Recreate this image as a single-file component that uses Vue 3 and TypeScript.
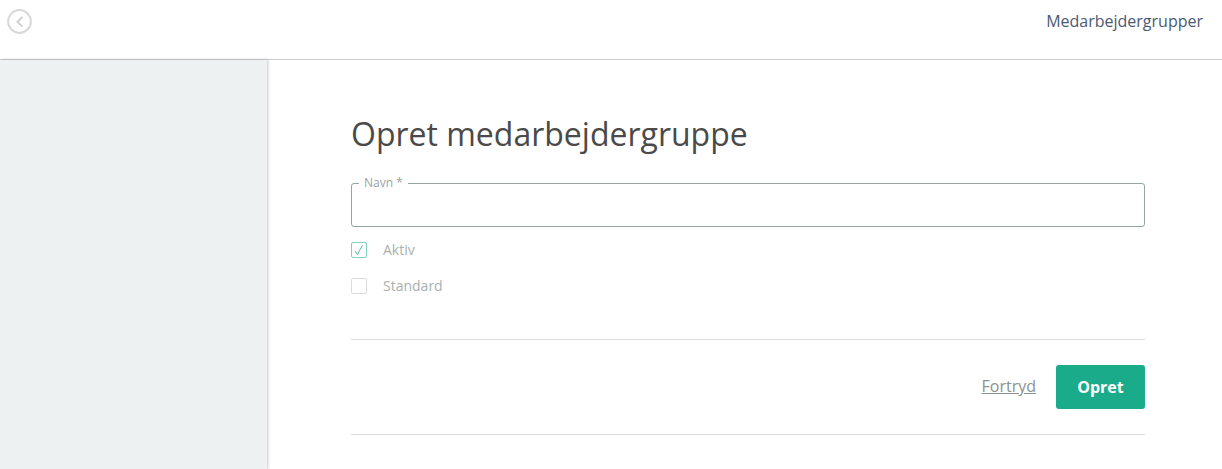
<script setup lang="ts">
const options = [
  { label: 'Aktiv', checked: true },
  { label: 'Standard', checked: false },
]
</script>

<template>
  <div class="page">
    <header class="top">
      <svg class="back" width="26" height="26" viewBox="0 0 26 26" fill="none">
        <circle cx="12.5" cy="12.5" r="11.4" stroke="#d9d9d9" stroke-width="2" />
        <path d="M15.5 8 L10.5 12.8 L15.5 17.6" stroke="#d2d2d2" stroke-width="2" />
      </svg>
      <span class="crumb">Medarbejdergrupper</span>
    </header>
    <div class="body">
      <aside class="side"></aside>
      <main class="main">
        <h1>Opret medarbejdergruppe</h1>
        <fieldset class="field">
          <legend>Navn *</legend>
        </fieldset>
        <div class="opts">
          <label v-for="o in options" :key="o.label" class="opt">
            <span class="box" :class="{ on: o.checked }">
              <svg v-if="o.checked" width="10" height="12" viewBox="0 0 10 12" fill="none">
                <path d="M1 7 L3.5 10.5 L8.5 1" stroke="#5fb8a6" stroke-width="1" />
              </svg>
            </span>
            <span class="lbl">{{ o.label }}</span>
          </label>
        </div>
        <div class="actions">
          <a class="cancel">Fortryd</a>
          <button class="submit" type="button">Opret</button>
        </div>
      </main>
    </div>
  </div>
</template>

<style>
html, body { margin: 0; background: #fff; overflow: hidden; }
</style>

<style scoped>
.page {
  width: 1222px;
  height: 469px;
  display: flex;
  flex-direction: column;
  font-family: "Open Sans", sans-serif;
  overflow: hidden;
}
.top {
  height: 60px;
  box-sizing: border-box;
  border-bottom: 1px solid #cfcfcf;
  display: flex;
  justify-content: space-between;
  align-items: flex-start;
  padding: 9px 19px 0 7px;
  flex: none;
}
.back { display: block; }
.crumb {
  font-size: 16px;
  line-height: 24px;
  color: #4a5a70;
}
.body { flex: 1; display: flex; min-height: 0; }
.side {
  width: 267px;
  flex: none;
  background: #eef1f2;
  box-shadow: 1px 0 3px rgba(0, 0, 0, 0.22);
}
.main {
  width: 794px;
  padding: 0 0 0 84px;
  display: flex;
  flex-direction: column;
}
h1 {
  margin: 52px 0 0;
  font-size: 32px;
  line-height: 44px;
  font-weight: 400;
  color: #4a4a4a;
}
.field {
  margin: 0;
  margin-top: 21px;
  padding: 0 0 0 7px;
  height: 50px;
  box-sizing: border-box;
  border: 1px solid #95a5a1;
  border-radius: 3px;
  min-width: 0;
}
.field legend {
  padding: 0 5px;
  font-size: 12px;
  line-height: 12px;
  color: #9aa5a3;
}
.opts { display: flex; flex-direction: column; gap: 20px; margin-top: 15px; }
.opt { display: flex; align-items: center; gap: 16px; height: 16px; }
.box {
  width: 16px;
  height: 16px;
  box-sizing: border-box;
  border: 1px solid #dcdcdc;
  border-radius: 2px;
  display: flex;
  align-items: center;
  justify-content: center;
}
.box.on { border-color: #7fd0c0; }
.lbl { font-size: 14px; line-height: 20px; color: #a9b0ae; }
.actions {
  margin-top: 45px;
  height: 96px;
  box-sizing: border-box;
  border-top: 1px solid #dcdcdc;
  border-bottom: 1px solid #dcdcdc;
  display: flex;
  justify-content: flex-end;
  align-items: center;
  gap: 20px;
}
.cancel {
  margin-bottom: 2px;
  font-size: 16px;
  line-height: 22px;
  color: #8a9296;
  text-decoration: underline;
}
.submit {
  width: 89px;
  height: 44px;
  border: 0;
  border-radius: 3px;
  background: #1aab8b;
  color: #fff;
  font-family: inherit;
  font-size: 16px;
  font-weight: 700;
}
</style>
